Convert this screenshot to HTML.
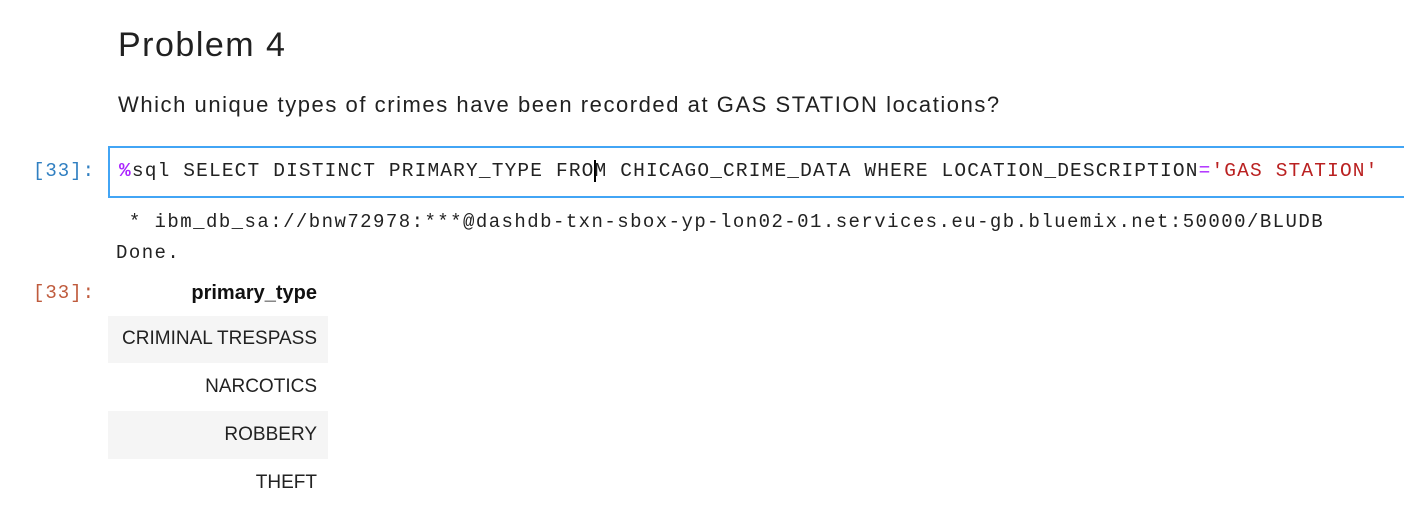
<!DOCTYPE html>
<html><head><style>
body{margin:0;width:1404px;height:522px;background:#fff;overflow:hidden;position:relative;font-family:"Liberation Sans",sans-serif;color:#222}
.a{position:absolute;white-space:pre}
.mono{font-family:"Liberation Mono",monospace}
</style></head><body>
<div class="a" style="left:118px;top:26px;font-size:34px;letter-spacing:1.5px;color:#212121">Problem 4</div>
<div class="a" style="left:118px;top:92px;font-size:22px;letter-spacing:1.55px;color:#212121">Which unique types of crimes have been recorded at GAS STATION locations?</div>
<div class="a mono" style="left:33px;top:160px;font-size:19px;color:#307fc1;letter-spacing:1px">[33]:</div>
<div style="position:absolute;left:108px;top:146px;width:1310px;height:48px;border:2px solid #42a5f5;background:#fff"></div>
<div class="a mono" style="left:119px;top:160px;font-size:19.5px;letter-spacing:1.15px;color:#222"><span style="color:#aa22ff;font-weight:bold">%</span>sql SELECT DISTINCT PRIMARY_TYPE FRO<span style="border-left:2px solid #000;margin-left:-1px;margin-right:-1px"></span>M CHICAGO_CRIME_DATA WHERE LOCATION_DESCRIPTION<span style="color:#aa22ff">=</span><span style="color:#ba2121">'GAS STATION'</span></div>
<div class="a mono" style="left:116px;top:207px;font-size:19px;line-height:31px;letter-spacing:1.45px;color:#222"> * ibm_db_sa://bnw72978:***@dashdb-txn-sbox-yp-lon02-01.services.eu-gb.bluemix.net:50000/BLUDB
Done.</div>
<div class="a mono" style="left:33px;top:282px;font-size:19px;color:#bf5b3d;letter-spacing:1px">[33]:</div>
<div class="a" style="left:108px;top:282px;width:209px;text-align:right;font-size:20px;font-weight:bold;color:#111">primary_type</div>
<div style="position:absolute;left:108px;top:316px;width:220px;height:47px;background:#f5f5f5"></div>
<div style="position:absolute;left:108px;top:411px;width:220px;height:48px;background:#f5f5f5"></div>
<div class="a" style="left:108px;top:328px;width:209px;text-align:right;font-size:19px;color:#222">CRIMINAL TRESPASS</div>
<div class="a" style="left:108px;top:376px;width:209px;text-align:right;font-size:19px;color:#222">NARCOTICS</div>
<div class="a" style="left:108px;top:424px;width:209px;text-align:right;font-size:19px;color:#222">ROBBERY</div>
<div class="a" style="left:108px;top:472px;width:209px;text-align:right;font-size:19px;color:#222">THEFT</div>
</body></html>
